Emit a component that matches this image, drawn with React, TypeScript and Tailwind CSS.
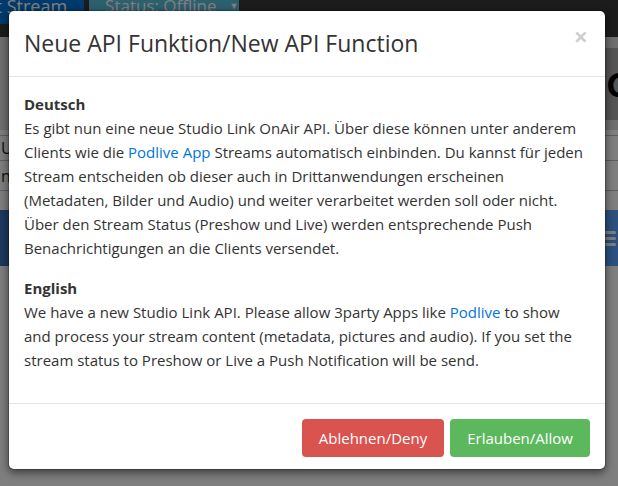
import React from 'react';

const deLines = [
  'Es gibt nun eine neue Studio Link OnAir API. Über diese können unter anderem',
  null,
  'Stream entscheiden ob dieser auch in Drittanwendungen erscheinen',
  '(Metadaten, Bilder und Audio) und weiter verarbeitet werden soll oder nicht.',
  'Über den Stream Status (Preshow und Live) werden entsprechende Push',
  'Benachrichtigungen an die Clients versendet.',
];

const App: React.FC = () => {
  return (
    <div
      className="relative h-[486px] w-[618px] overflow-hidden bg-white"
      style={{ fontFamily: '"Open Sans", "Noto Sans", sans-serif' }}
    >
      {/* Page behind the dialog */}
      <div className="flex h-[37px] items-start gap-[5px] bg-[#383838]">
        <div className="-ml-[46px] -mt-[12px] flex h-[36px] items-center whitespace-nowrap rounded-b bg-[#0275d8] pl-4 pr-[17px] text-[18px] text-white">
          Edit Stream
        </div>
        <div className="-mt-[12px] flex h-[36px] w-[150px] items-center gap-[13px] whitespace-nowrap rounded-b bg-[#5bc0de] px-4 text-[17px] text-white">
          <span>Status: Offline</span>
          <span className="text-[9px]">▼</span>
        </div>
      </div>
      <div className="flex h-[93px] items-start justify-end bg-[#dedede]">
        <div className="mt-[11px] flex h-[72px] w-[200px] items-center justify-start overflow-hidden bg-[#aaaaaa] pl-[188px]">
          <span className="text-[34px] font-bold whitespace-nowrap text-black">Go Live</span>
        </div>
      </div>
      <div className="h-[5px] bg-white" />
      <div className="flex h-[25px] items-center border-t border-[#bbb] px-[1px] text-[16px] text-[#222]">Url</div>
      <div className="flex h-[30px] items-center border-t border-[#bbb] px-[1px] text-[16px] text-[#222]">name</div>
      <div className="h-[20px] border-t border-[#bbb]" />
      <div className="flex h-[56px] items-center justify-between bg-[#3a73bc]">
        <div />
        <div className="flex h-full w-[200px] items-center justify-end bg-[#5aa0ff] pr-[2px]">
          <div className="flex flex-col gap-[3px]">
            <div className="h-[3px] w-[14px] rounded bg-white" />
            <div className="h-[3px] w-[14px] rounded bg-white" />
            <div className="h-[3px] w-[14px] rounded bg-white" />
          </div>
        </div>
      </div>
      <div className="absolute inset-0 bg-black/50" />

      {/* Dialog */}
      <div className="absolute left-[8px] top-[10px] w-[598px] rounded-[6px] border border-black/20 bg-white bg-clip-padding shadow-[0_3px_9px_rgba(0,0,0,0.5)]">
        <div className="flex h-[66px] items-center justify-between border-b border-[#e5e5e5] pl-[15px] pr-[17px]">
          <h4 className="text-[23px] font-normal leading-none text-[#333]">Neue API Funktion/New API Function</h4>
          <button className="-mt-[14px] text-[25px] font-bold leading-none text-black/20">×</button>
        </div>
        <div className="px-[15px] pt-[15px] pb-[15px] text-[15px] leading-[24px] whitespace-nowrap text-[#333]">
          <p className="mb-4">
            <b className="font-bold">Deutsch</b>
            <br />
            {deLines.map((line, i) => (
              <React.Fragment key={i}>
                {line === null ? (
                  <>
                    Clients wie die <a className="text-[#0275d8]">Podlive App</a> Streams automatisch einbinden. Du kannst für jeden
                  </>
                ) : (
                  line
                )}
                {i < deLines.length - 1 && <br />}
              </React.Fragment>
            ))}
          </p>
          <p className="mb-4">
            <b className="font-bold">English</b>
            <br />
            We have a new Studio Link API. Please allow 3party Apps like <a className="text-[#0275d8]">Podlive</a> to show
            <br />
            and process your stream content (metadata, pictures and audio). If you set the
            <br />
            stream status to Preshow or Live a Push Notification will be send.
          </p>
        </div>
        <div className="flex justify-end gap-[6px] border-t border-[#e5e5e5] px-[15px] pt-[15px] pb-[12px]">
          <button className="h-[38px] rounded-[4px] bg-[#d9534f] px-[17px] text-[15px] text-white">Ablehnen/Deny</button>
          <button className="h-[38px] rounded-[4px] bg-[#5cb85c] px-[17px] text-[15px] text-white">Erlauben/Allow</button>
        </div>
      </div>
    </div>
  );
};

export default App;
